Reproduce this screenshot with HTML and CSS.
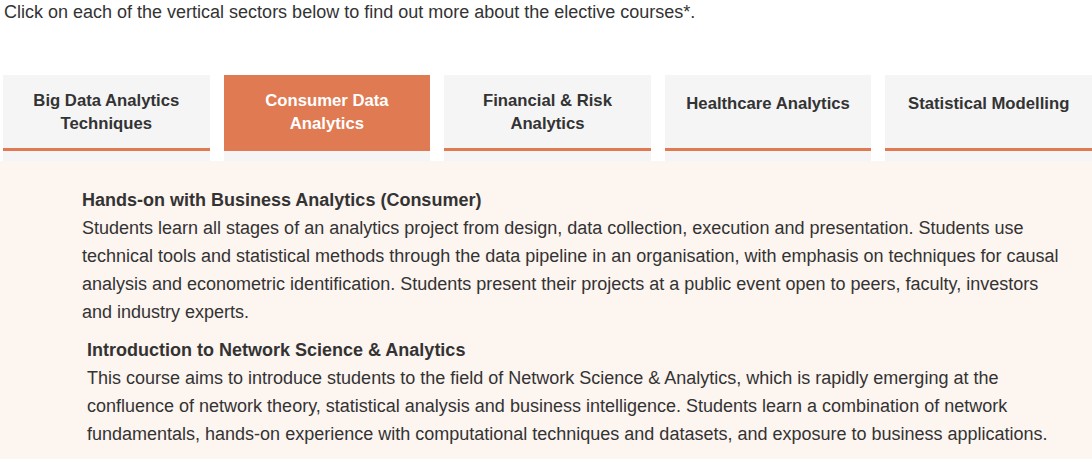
FILE: index.html
```html
<!DOCTYPE html>
<html lang="en">
<head>
<meta charset="UTF-8" />
<meta name="viewport" content="width=device-width, initial-scale=1" />
<title>Elective Courses</title>
<link rel="stylesheet" href="styles.css">
</head>
<body>

<p class="intro">Click on each of the vertical sectors below to find out more about the elective courses*.</p>

<ul class="sectors">
  <li><a href="#bigdata">Big Data Analytics Techniques</a></li>
  <li class="active"><a href="#consumer">Consumer Data Analytics</a></li>
  <li><a href="#finance">Financial &amp; Risk Analytics</a></li>
  <li><a href="#health" class="single">Healthcare Analytics</a></li>
  <li><a href="#stats" class="single">Statistical Modelling</a></li>
</ul>

<section class="sector-panel" id="consumer">
  <div class="course">
    <h4>Hands-on with Business Analytics (Consumer)</h4>
    <p>Students learn all stages of an analytics project from design, data collection, execution and presentation. Students use technical tools and statistical methods through the data pipeline in an organisation, with emphasis on techniques for causal analysis and econometric identification. Students present their projects at a public event open to peers, faculty, investors and industry experts.</p>
  </div>
  <div class="course course-indent">
    <h4>Introduction to Network Science &amp; Analytics</h4>
    <p>This course aims to introduce students to the field of Network Science &amp; Analytics, which is rapidly emerging at the confluence of network theory, statistical analysis and business intelligence. Students learn a combination of network fundamentals, hands-on experience with computational techniques and datasets, and exposure to business applications.</p>
  </div>
</section>

</body>
</html>
```

FILE: styles.css
```css
/* Basic Reset */
* {
  margin: 0; padding: 0; box-sizing: border-box;
}
body {
  font-family: "Liberation Sans", Arial, Helvetica, sans-serif;
  font-size: 18px;
  color: #333;
  background: #fff;
  overflow: hidden;
}
.intro {
  line-height: 24px;
  padding-left: 4px;
}
/* Sector tabs */
.sectors {
  list-style: none;
  display: flex;
  gap: 14px;
  margin-top: 51px;
  padding-left: 3px;
}
.sectors li {
  flex: 1;
  background: #f5f5f5;
  padding-bottom: 10px;
}
.sectors a {
  display: block;
  height: 76px;
  padding: 14px 12px 0;
  border-bottom: 3px solid #e07a53;
  color: #333;
  font-size: 16.7px;
  font-weight: bold;
  line-height: 23px;
  text-align: center;
  text-decoration: none;
}
.sectors a.single {
  padding-top: 17px;
}
.sectors li.active a {
  background: #e07a53;
  color: #fff;
}
/* Course descriptions */
.sector-panel {
  background: #fdf5f0;
  padding: 25px 30px 20px 82px;
  line-height: 28px;
}
.course h4 {
  font-size: 18px;
}
.course-indent {
  margin-top: 10px;
  padding-left: 5px;
}
```
